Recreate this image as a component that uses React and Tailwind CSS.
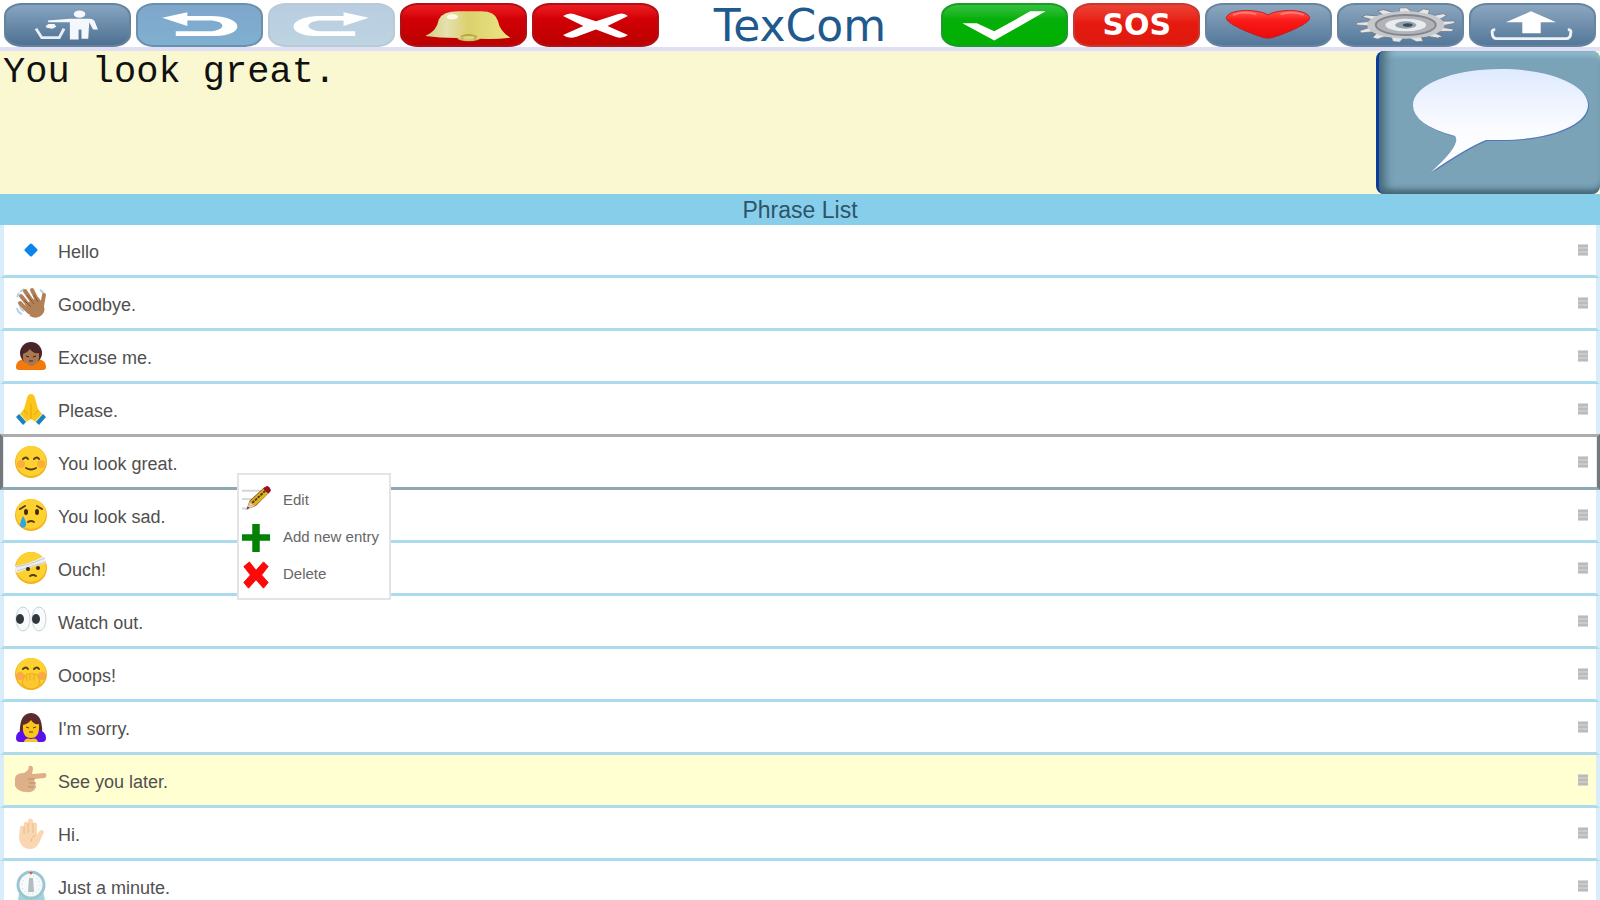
import React from 'react';
import clsx from 'clsx';

/* ---------- toolbar drawings, all on a 127 x 44 button face ---------- */

const Face = ({ children }) => (
    <svg viewBox="0 0 127 44" preserveAspectRatio="none" className="block h-full w-full" aria-hidden="true">
        {children}
    </svg>
);

const ClearIcon = () => (
    <Face>
        <path d="M31 26l6 10h18l5-10" fill="none" stroke="#e8eef7" strokeWidth="3" />
        <path d="M41 23l3-2h6l2 3-4 2-6-1z" fill="#f4f8fd" />
        <ellipse cx="76" cy="10" rx="6" ry="4" fill="#f4f8fd" />
        <path d="M43 17l23-2h20q5 0 6 4l3 8h-5l-4-8-1 18h-7V27h-3v11h-9V19H44z" fill="#f4f8fd" />
    </Face>
);

const UndoPath = () => (
    <path d="M25 14l26-6v4h24c34 0 38 21 5 22H39v-5h34c20-1 18-12 0-12H51v6z" fill="#fff" />
);

const UndoIcon = () => <Face><UndoPath /></Face>;

const RedoIcon = () => (
    <Face>
        <g transform="matrix(-1 0 0 1 127 0)"><UndoPath /></g>
    </Face>
);

const BellIcon = () => (
    <Face>
        <defs>
            <linearGradient id="bell" x1="0" x2="1">
                <stop offset="0" stopColor="#cfcf7a" />
                <stop offset="0.25" stopColor="#e6e0b0" />
                <stop offset="0.5" stopColor="#dbd06e" />
                <stop offset="1" stopColor="#eae684" />
            </linearGradient>
        </defs>
        <ellipse cx="69" cy="36" rx="12" ry="4" fill="#cbc062" />
        <path d="M24 34q12-5 14-18Q42 7 58 7h24q14 0 17 10 2 12 13 19-22 3-44 0-24 1-44-2z" fill="url(#bell)" />
        <ellipse cx="52" cy="13" rx="6" ry="3" fill="#fbf8e4" />
        <path d="M60 34q8-4 18 0l-2 3q-8 2-14-1z" fill="#b5a64a" />
        <path d="M62 35q7-2 14 0l-3 3h-8z" fill="#e0d67c" />
    </Face>
);

const CrossIcon = () => (
    <Face>
        <path d="M30 12q7-5 14-1l20 7 20-7q8-4 13 1l-21 11 21 10q-6 5-13 2l-20-8-20 8q-8 3-14-2l21-10z" fill="#fff" />
    </Face>
);

const CheckIcon = () => (
    <Face>
        <path d="M20 20h15l18 9L90 7h16L53 39z" fill="#fff" />
    </Face>
);

const HeartIcon = () => (
    <Face>
        <defs>
            <linearGradient id="heart" x2="0" y2="1">
                <stop offset="0" stopColor="#ff5a50" />
                <stop offset="0.35" stopColor="#fb1b18" />
                <stop offset="1" stopColor="#e80c0c" />
            </linearGradient>
        </defs>
        <path d="M63 11C53 4 22 4 20 14c-1 6 24 17 36 21 5 2 9 2 14 0 12-4 37-15 36-21C104 4 73 4 63 11z" fill="url(#heart)" stroke="#c81820" />
        <path d="M27 11q10-5 24-1M76 10q14-4 24 1" fill="none" stroke="#ff7a72" strokeWidth="2" />
    </Face>
);

const GearIcon = () => (
    <Face>
        {Array.from({ length: 13 }, (_, i) => (
            <g key={i} transform={`translate(69 22) scale(1 .37) rotate(${i * (360 / 13)})`}>
                <path d="M-7-36l1-15h7l6 15z" fill="#e4e5e8" stroke="#6f757d" />
            </g>
        ))}
        <ellipse cx="69" cy="22" rx="40" ry="15" fill="#c6c8cc" />
        <ellipse cx="69" cy="22" rx="31" ry="11" fill="#b1b3b9" stroke="#83868d" strokeWidth="2" />
        <ellipse cx="69" cy="22" rx="21" ry="7" fill="#e9ecef" />
        <ellipse cx="69" cy="22" rx="11" ry="4" fill="#94a3b0" />
        <ellipse cx="71" cy="22" rx="5" ry="2" fill="#3e4a55" />
    </Face>
);

const UploadIcon = () => (
    <Face>
        <path d="M62 7l26 12H72v12H53V19H36z" fill="#fff" />
        <path d="M25 27q-4 0-3 4 0 6 5 6h71q5 0 5-6 1-4-3-4" fill="none" stroke="#eef3f8" strokeWidth="3" />
    </Face>
);

const SosText = () => (
    <span className="font-['DejaVu_Sans'] text-[30px] leading-none font-bold text-white">SOS</span>
);

const TONES = {
    slate: 'border-[#66839d] bg-linear-to-b from-[#86a5c2] to-[#4f7091]',
    sky: 'border-[#6b90ad] bg-linear-to-b from-[#7fa6cb] to-[#7fb0d0]',
    faded: 'border-[#b9cad6] bg-linear-to-b from-[#b9cde0] to-[#bdd4e2]',
    red: 'border-[#b01018] bg-linear-to-b from-[#ee1c20] via-[#d20006] via-35% to-[#bb0000]',
    green: 'border-[#1c9a2a] bg-linear-to-b from-[#30c23a] via-[#05b008] via-35% to-[#00b000]',
    sos: 'border-[#c43a30] bg-linear-to-b from-[#ee4034] via-[#e6190f] via-45% to-[#dd1a0e]',
    steel: 'border-[#6885a0] bg-linear-to-b from-[#8ba6bf] to-[#54789a]',
};

const ToolButton = ({ label, tone, icon: Icon, disabled }) => (
    <button
        type="button"
        aria-label={label}
        disabled={disabled}
        className={clsx(
            'flex h-11 min-w-0 items-center justify-center overflow-hidden rounded-[18px_/_13px] border-2',
            TONES[tone],
        )}
    >
        <Icon />
    </button>
);

const TopBar = () => (
    <header className="grid grid-cols-[repeat(5,1fr)_2.15fr_repeat(5,1fr)] items-center gap-[5px] border-b-4 border-[#e1dff6] bg-white px-1 pt-[3px]">
        <ToolButton label="Clear" tone="slate" icon={ClearIcon} />
        <ToolButton label="Undo" tone="sky" icon={UndoIcon} />
        <ToolButton label="Redo" tone="faded" icon={RedoIcon} disabled />
        <ToolButton label="Bell" tone="red" icon={BellIcon} />
        <ToolButton label="No" tone="red" icon={CrossIcon} />
        <h1 className="h-11 text-center font-['DejaVu_Sans'] text-[44px] leading-[46px] text-[#1f5a8e]">TexCom</h1>
        <ToolButton label="Yes" tone="green" icon={CheckIcon} />
        <ToolButton label="Emergency" tone="sos" icon={SosText} />
        <ToolButton label="Favourites" tone="steel" icon={HeartIcon} />
        <ToolButton label="Settings" tone="steel" icon={GearIcon} />
        <ToolButton label="Share" tone="steel" icon={UploadIcon} />
    </header>
);

const MessageBar = () => (
    <section className="flex h-[143px] bg-[#f9f8d0]">
        <textarea
            aria-label="Message"
            defaultValue="You look great."
            className="min-w-0 flex-1 resize-none bg-transparent px-[3px] font-['Liberation_Mono',monospace] text-[37px] leading-[42px] text-[#111] outline-none"
        />
        <button
            type="button"
            aria-label="Speak"
            className="w-[14%] rounded-lg border-l-3 border-[#0b3c9c] bg-[#7aa3b8] shadow-[inset_12px_0_10px_-6px_#46697a,inset_0_-8px_6px_-4px_#41616f,inset_0_8px_4px_-3px_#90bccd]"
        >
            <svg viewBox="0 0 221 143" className="block h-full w-full" aria-hidden="true">
                <defs>
                    <linearGradient id="bubble" x2="0" y2="1">
                        <stop offset="0" stopColor="#dfeaff" />
                        <stop offset="0.6" stopColor="#fbfcff" />
                        <stop offset="1" stopColor="#fff" />
                    </linearGradient>
                </defs>
                <path d="M122 18c49 0 87 16 87 36s-38 35-87 35h-15Q89 96 52 121q31-28 24-36-42-11-42-31c0-20 39-36 88-36z" fill="#5577b8" transform="translate(1 1)" />
                <path d="M122 18c49 0 87 16 87 36s-38 35-87 35h-15Q89 96 52 121q31-28 24-36-42-11-42-31c0-20 39-36 88-36z" fill="url(#bubble)" />
            </svg>
        </button>
    </section>
);

/* ---------- phrase pictures, 32 x 32 ---------- */

const Pic = ({ children, className = 'size-8' }) => (
    <svg viewBox="0 0 32 32" className={clsx('shrink-0', className)} aria-hidden="true">
        {children}
    </svg>
);

const Head = () => (
    <>
        <circle cx="16" cy="16" r="16" fill="#f4b21e" />
        <circle cx="16" cy="15" r="15" fill="#fdd130" />
    </>
);

const PICS = {
    dot: <path d="M16 11l5 5-5 5-5-5z" fill="#0b84ee" stroke="#0b84ee" strokeWidth="3" strokeLinejoin="round" />,
    wave: (
        <>
            <path d="M5 5l4-3M2 10l2-4M25 3q4 2 4 7M2 21q1 5 5 6M5 18q0 4 4 6" fill="none" stroke="#b9d2df" strokeWidth="2" />
            <g fill="none" stroke="#b28057" strokeWidth="4" strokeLinecap="round">
                <path d="M6 9l9 11M10 4l9 13M17 3l6 12M5 16l9 9M29 8l-2 11" />
            </g>
            <path d="M10 17l13-7 4 5q5 8 0 13-6 5-12 1z" fill="#b28057" />
            <path d="M12 8l7 9M9 13l7 7M19 8l4 7" fill="none" stroke="#82583a" />
        </>
    ),
    bowOrange: (
        <>
            <path d="M1 27q0-7 8-8h14q8 1 8 8 0 3-3 3H4q-3 0-3-3z" fill="#f27a0b" />
            <circle cx="16" cy="13" r="11" fill="#4a2428" />
            <path d="M8 14q4-1 7-5 3 5 9 4 1 13-8 13T8 14z" fill="#a97850" />
            <path d="M6 24q5-4 9 2h3q4-6 8-2l-4 6H10z" fill="#f27a0b" />
            <path d="M11 16l3 1M18 17l3-1M14 21h4" stroke="#3c1c1c" />
        </>
    ),
    pray: (
        <>
            <path d="M16 1q-3 0-4 4L9 16l-5 6 5 8 7-4 7 4 5-8-5-6-3-11q-1-4-4-4z" fill="#fcc51c" />
            <path d="M16 11v15M9 17l4 5M23 17l-4 5" stroke="#e7a211" />
            <path d="M4 21l7 8-3 3-7-8zM28 21l-7 8 3 3 7-8z" fill="#1982c4" />
            <path d="M5 21l6 7M27 21l-6 7" stroke="#d6ecf8" />
        </>
    ),
    smile: (
        <>
            <Head />
            <circle cx="6" cy="18" r="4" fill="#f99f3f" opacity="0.7" />
            <circle cx="26" cy="18" r="4" fill="#f99f3f" opacity="0.7" />
            <path d="M8 13q3-3 5 0M19 13q3-3 5 0M11 22q5 3 10 0" fill="none" stroke="#5a3a12" strokeWidth="2" strokeLinecap="round" />
        </>
    ),
    cry: (
        <>
            <Head />
            <path d="M5 10l5-3M27 10l-5-3M13 23q3-2 6 0" fill="none" stroke="#5a3a12" strokeWidth="2" strokeLinecap="round" />
            <ellipse cx="11" cy="13" rx="2" ry="3" fill="#422b0d" />
            <ellipse cx="22" cy="13" rx="2" ry="3" fill="#422b0d" />
            <path d="M8 17q5 8 2 11-4 2-5-2 0-3 3-9z" fill="#2fa5e8" />
        </>
    ),
    bandage: (
        <>
            <Head />
            <path d="M0 14Q14 12 29 4l2 7Q18 14 2 21q-3-2-2-7z" fill="#eceff2" />
            <path d="M1 15Q15 13 30 6M2 19q14-5 29-9" fill="none" stroke="#c3cbd3" />
            <circle cx="13" cy="17" r="2" fill="#422b0d" />
            <circle cx="23" cy="16" r="2" fill="#422b0d" />
            <path d="M15 24q3-2 6 0" fill="none" stroke="#5a3a12" strokeWidth="2" strokeLinecap="round" />
        </>
    ),
    eyes: (
        <>
            <ellipse cx="8" cy="14" rx="7" ry="12" fill="#f8fafb" stroke="#c9d2d6" />
            <ellipse cx="24" cy="14" rx="7" ry="12" fill="#f8fafb" stroke="#c9d2d6" />
            <ellipse cx="5" cy="14" rx="4" ry="5" fill="#30383c" />
            <ellipse cx="21" cy="14" rx="4" ry="5" fill="#30383c" />
        </>
    ),
    oops: (
        <>
            <Head />
            <circle cx="5" cy="18" r="4" fill="#f5905a" opacity="0.6" />
            <circle cx="27" cy="18" r="4" fill="#f5905a" opacity="0.6" />
            <path d="M8 11q3-3 5 0M19 11q3-3 5 0" fill="none" stroke="#5a3a12" strokeWidth="2" strokeLinecap="round" />
            <path d="M7 24l3-7q6-3 13 0l2 8q-2 6-9 6t-9-7z" fill="#fcc832" stroke="#eda81c" />
            <path d="M11 18l1 5M15 17v5M19 17v5" stroke="#eda81c" />
        </>
    ),
    bowPurple: (
        <>
            <path d="M5 28Q3 2 16 2t11 26z" fill="#5b2a2a" />
            <path d="M1 27q0-7 8-8h14q8 1 8 8 0 4-4 4H5q-4 0-4-4z" fill="#5a10e8" />
            <path d="M8 14q5-1 8-5 3 5 8 4 1 14-8 14T8 14z" fill="#fcc51c" />
            <path d="M11 16l3 1M18 17l3-1M14 21h4" stroke="#5a3a12" />
            <path d="M9 31q1-5 7-3 6-2 7 3z" fill="#fcc51c" />
        </>
    ),
    point: (
        <>
            <path d="M0 14q1-5 9-5l4-3 1-4q4-1 4 3l-1 5 13-1q3 2 0 5l-11 1 2 8q-2 6-9 5-9 0-12-6z" fill="#ddb08a" />
            <path d="M13 15h7M14 19h7M13 23h6" stroke="#bf8d66" />
        </>
    ),
    hand: (
        <>
            <path d="M5 10q2-3 4 0V6q2-3 4 0V3q2-3 5 0v3q3-2 4 1v11q2-5 5-5 3 1 1 4l-4 9q-3 6-9 6-10 0-11-12z" fill="#fad7b0" />
            <path d="M9 9v8M13 6v10M18 6v10M21 18q-5 2-5 7" fill="none" stroke="#e6ba90" />
        </>
    ),
    timer: (
        <>
            <path d="M3 30L5 17h22l3 13q-1 2-4 2H5q-3 0-2-2z" fill="#9fd5dc" />
            <circle cx="16" cy="15" r="13" fill="#f5fafa" stroke="#9cc6cf" strokeWidth="3" />
            <circle cx="16" cy="15" r="9" fill="none" stroke="#cad5da" strokeDasharray="1 3" />
            <path d="M14 8h4l1 14h-6z" fill="#b3bcc1" />
            <path d="M14 2h4l-2 3z" fill="#e2574c" />
        </>
    ),
};

const PHRASES = [
    { pic: 'dot', text: 'Hello' },
    { pic: 'wave', text: 'Goodbye.' },
    { pic: 'bowOrange', text: 'Excuse me.' },
    { pic: 'pray', text: 'Please.' },
    { pic: 'smile', text: 'You look great.', selected: true },
    { pic: 'cry', text: 'You look sad.' },
    { pic: 'bandage', text: 'Ouch!' },
    { pic: 'eyes', text: 'Watch out.' },
    { pic: 'oops', text: 'Ooops!' },
    { pic: 'bowPurple', text: "I'm sorry." },
    { pic: 'point', text: 'See you later.', marked: true },
    { pic: 'hand', text: 'Hi.' },
    { pic: 'timer', text: 'Just a minute.' },
];

const MENU = [
    {
        label: 'Edit',
        pic: (
            <>
                <path d="M1 5h20M1 14h13M1 24h8" stroke="#d3d6d9" strokeWidth="2" />
                <path d="M6 25l3-9L25 1l6 5-15 15z" fill="#6b4a10" />
                <path d="M9 17L24 3l5 5-14 13z" fill="#e5b122" />
                <path d="M12 18L26 5" stroke="#4a3a18" strokeWidth="2" strokeDasharray="3 1" />
                <path d="M6 25l3-8 6 4z" fill="#eec7a2" />
                <path d="M6 25l1-3 2 1z" fill="#333" />
                <path d="M24 3l3-3q4 0 5 5l-3 3z" fill="#9c0f24" />
            </>
        ),
    },
    { label: 'Add new entry', pic: <path d="M12 1h8v11h11v7H20v12h-8V19H1v-7h11z" fill="#058205" /> },
    { label: 'Delete', pic: <path d="M3 7l6-5 7 9 8-9 5 5-7 9 7 8-5 6-8-9-8 9-5-6 7-8z" fill="#fb0a0a" stroke="#fb0a0a" strokeLinejoin="round" /> },
];

const ContextMenu = () => (
    <div role="menu" className="absolute top-9 left-[233px] z-10 w-[154px] border-2 border-[#e4e4e4] bg-white pt-[7px] pb-[5px]">
        {MENU.map((item) => (
            <button key={item.label} type="button" role="menuitem" className="flex h-[37px] w-full items-center gap-3 pl-[2px] text-[15px] whitespace-nowrap text-[#666]">
                <Pic className="size-[30px]">{item.pic}</Pic>
                {item.label}
            </button>
        ))}
    </div>
);

const PhraseRow = ({ phrase }) => (
    <li
        className={clsx(
            'relative flex h-[53px] shrink-0 items-center border-x-4 border-b-3 border-x-[#d8edfa] border-b-[#acdaee] pr-2 pl-[11px]',
            phrase.marked ? 'bg-[#ffffd2]' : 'bg-white',
        )}
    >
        {/* focus frame, drawn over the row lines */}
        {phrase.selected && (
            <span className="pointer-events-none absolute -inset-x-1 -top-[3px] -bottom-[3px] border-3 border-x-[#777] border-t-[#acacac] border-b-[#8fa8b2]" />
        )}
        <button type="button" className="flex min-w-0 flex-1 items-center gap-[11px] text-left text-lg text-[#505050]">
            <Pic>{PICS[phrase.pic]}</Pic>
            <span className="pt-1">{phrase.text}</span>
        </button>
        <button type="button" aria-label={`Move ${phrase.text}`}>
            <svg viewBox="0 0 10 12" className="h-3 w-[10px]" aria-hidden="true">
                <path d="M0 2h10M0 6h10M0 10h10" stroke="#b4b4b4" strokeWidth="3" />
                <path d="M0 1h10v10H0z" fill="#c0c0c0" opacity="0.6" />
            </svg>
        </button>
        {phrase.selected && <ContextMenu />}
    </li>
);

const App = () => (
    <div className="flex h-screen flex-col overflow-hidden bg-white font-['Liberation_Sans',sans-serif]">
        <TopBar />
        <MessageBar />
        <h2 className="h-[31px] shrink-0 bg-[#87ceeb] text-center text-[23px] leading-8 text-[#2d5468]">Phrase List</h2>
        <ul className="flex min-h-0 flex-1 flex-col overflow-hidden">
            {PHRASES.map((phrase) => (
                <PhraseRow key={phrase.text} phrase={phrase} />
            ))}
        </ul>
    </div>
);

export default App;
